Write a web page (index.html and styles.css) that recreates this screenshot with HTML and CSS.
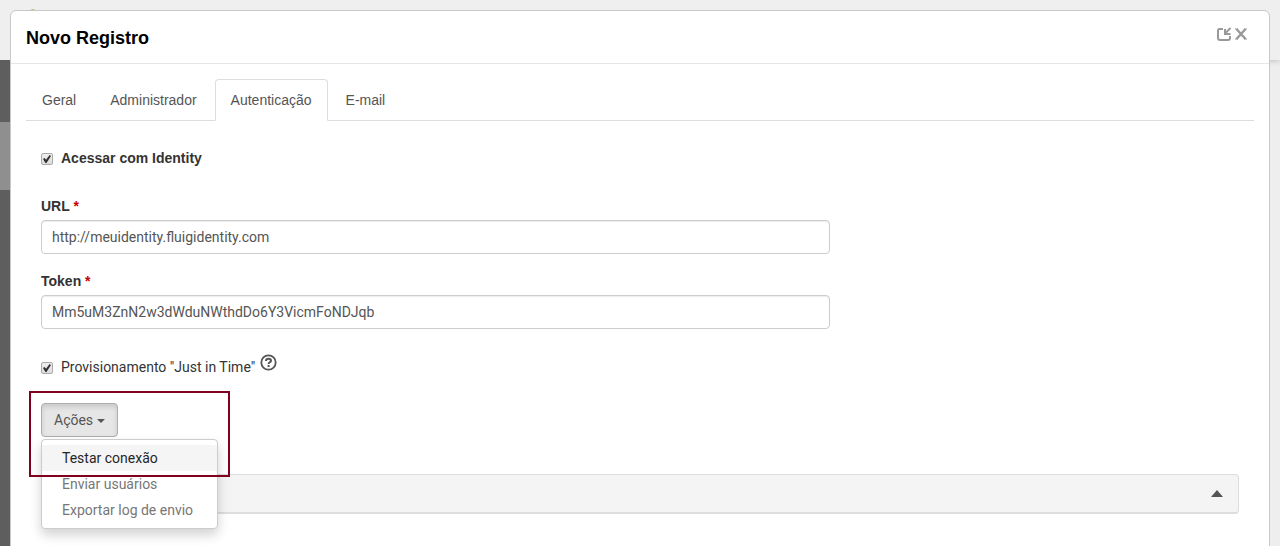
FILE: index.html
```html
<!DOCTYPE html>
<html lang="pt-BR">
<head>
  <meta charset="UTF-8">
  <title>Novo Registro</title>
  <meta name="viewport" content="width=device-width, initial-scale=1.0">
  <link rel="stylesheet" href="styles.css">
</head>
<body>
  <div class="page">
    <div class="topbar"><span class="logo"></span></div>
    <div class="sidebar"><div class="sidebar-item"></div></div>
  </div>

  <div class="modal" role="dialog" aria-labelledby="modal-title">
    <div class="modal-header">
      <h3 id="modal-title">Novo Registro</h3>
      <div class="modal-tools">
        <button type="button" aria-label="Restaurar">
          <svg width="16" height="16" viewBox="0 0 16 16" fill="none" stroke="#999" stroke-width="2">
            <path d="M7 3H3.500Q2 3 2 4.500V12Q2 14 4 14H12Q14 14 14 12V10"/>
            <path d="M14.500 2L9.500 7"/>
            <path d="M9 3V8H14.500"/>
          </svg>
        </button>
        <button type="button" aria-label="Fechar">
          <svg width="12" height="16" viewBox="0 0 12 16" fill="none" stroke="#999" stroke-width="2">
            <path d="M1.500 3L10.500 13M10.500 3L1.500 13" stroke-width="2.400"/>
            <path d="M0 3H3M9 3H12M0 13H3M9 13H12" stroke-width="1"/>
          </svg>
        </button>
      </div>
    </div>

    <div class="modal-body">
      <nav class="tabs">
        <a href="#geral">Geral</a>
        <a href="#administrador">Administrador</a>
        <a href="#autenticacao" class="active">Autenticação</a>
        <a href="#email">E-mail</a>
      </nav>

      <form class="tab-content">
        <label class="check check-strong">
          <input type="checkbox" checked>
          <span>Acessar com Identity</span>
        </label>

        <div class="form-group">
          <label for="url">URL <span class="required">*</span></label>
          <input type="text" id="url" value="http://meuidentity.fluigidentity.com">
        </div>
        <div class="form-group">
          <label for="token">Token <span class="required">*</span></label>
          <input type="text" id="token" value="Mm5uM3ZnN2w3dWduNWthdDo6Y3VicmFoNDJqb">
        </div>

        <div class="check-row">
          <label class="check">
            <input type="checkbox" checked>
            <span>Provisionamento "Just in Time"</span>
          </label>
          <svg class="help" width="17" height="17" viewBox="0 0 17 17" fill="none" stroke="#555" stroke-width="2">
            <circle cx="8.500" cy="8.500" r="7.200" stroke-width="1.800"/>
            <path d="M6 7Q6 4.700 8.500 4.700T11 6.800Q11 7.800 9.700 8.300Q8.600 8.800 8.600 10"/>
            <path d="M8.600 11V13"/>
          </svg>
        </div>

        <div class="dropdown">
          <button type="button" class="btn" aria-expanded="true">Ações <span class="caret"></span></button>
          <div class="menu">
            <a href="#testar" class="hover">Testar conexão</a>
            <a href="#enviar">Enviar usuários</a>
            <a href="#exportar">Exportar log de envio</a>
          </div>
          <div class="highlight"></div>
        </div>

        <div class="panel">
          <button type="button" class="panel-toggle" aria-label="Recolher"></button>
        </div>
      </form>
    </div>
  </div>
</body>
</html>
```

FILE: styles.css
```css
* {
  box-sizing: border-box;
}
body {
  margin: 0;
  height: 100vh;
  overflow: hidden;
  background: #eee;
  font-family: Roboto, Arial, sans-serif;
  font-size: 14px;
  line-height: 20px;
  color: #333;
}
.page {
  display: flex;
  flex-direction: column;
  height: 100%;
}
.topbar {
  height: 60px;
  padding: 9px 30px;
  background: #efefef;
  box-shadow: 0 1px 6px rgba(0,0,0,0.2);
}
.logo {
  display: block;
  width: 6px;
  height: 6px;
  border-radius: 50%;
  background: #b9c77c;
}
.sidebar {
  flex: 1;
  width: 60px;
  padding-top: 62px;
  background: #5e5e5e;
  z-index: 1;
}
.sidebar-item {
  height: 68px;
  background: #8f8f8f;
}

/* modal */
.modal {
  position: absolute;
  top: 10px;
  left: 10px;
  right: 10px;
  z-index: 2;
  min-height: 100vh;
  background: #fff;
  border: 1px solid #c8c8c8;
  border-radius: 6px;
}
.modal-header {
  display: flex;
  justify-content: space-between;
  align-items: flex-start;
  padding: 15px 22px 13px 15px;
  border-bottom: 1px solid #e5e5e5;
}
.modal-header h3 {
  margin: 0;
  font-family: "Liberation Sans", Arial, sans-serif;
  font-size: 18px;
  font-weight: bold;
  line-height: 24px;
  color: #000;
}
.modal-tools {
  display: flex;
  gap: 3px;
}
.modal-tools button {
  padding: 0;
  border: none;
  background: none;
  cursor: pointer;
}
.modal-tools svg {
  display: block;
}
.modal-body {
  padding: 15px;
}

/* tabs */
.tabs {
  display: flex;
  gap: 2px;
  border-bottom: 1px solid #ddd;
  font-family: "Liberation Sans", Arial, sans-serif;
}
.tabs a {
  margin-bottom: -1px;
  padding: 10px 15px;
  border: 1px solid transparent;
  border-radius: 4px 4px 0 0;
  color: #555;
  text-decoration: none;
}
.tabs .active {
  background: #fff;
  border-color: #ddd;
  border-bottom-color: #fff;
}

/* form */
.tab-content {
  padding: 27px 15px;
}
.check {
  display: flex;
  align-items: center;
  gap: 8px;
}
.check-strong {
  margin-bottom: 28px;
}
.check-strong,
.form-group label {
  font-family: "Liberation Sans", Arial, sans-serif;
  font-weight: bold;
}
.check input {
  appearance: none;
  display: grid;
  place-items: center;
  width: 12px;
  height: 12px;
  margin: 2px 0 0;
  border: 1px solid #aaa;
  border-radius: 2px;
  background: linear-gradient(#eee, #ddd);
}
.check input:checked::before {
  content: "";
  width: 8px;
  height: 8px;
  background: #333;
  clip-path: polygon(0 50%, 20% 38%, 38% 58%, 82% 0, 100% 14%, 44% 100%, 30% 100%);
}
.check-row {
  display: flex;
  align-items: flex-start;
  gap: 5px;
  padding-top: 8px;
}
.check-row .check {
  padding-top: 3px;
}
.form-group {
  width: calc(100% * 2 / 3 - 10px);
  margin-bottom: 17px;
}
.form-group label {
  display: block;
  margin-bottom: 4px;
}
.form-group .required {
  color: #c00;
}
.form-group input {
  display: block;
  width: 100%;
  height: 34px;
  padding: 6px 10px;
  border: 1px solid #ccc;
  border-radius: 4px;
  box-shadow: inset 0 1px 1px rgba(0,0,0,0.075);
  font: inherit;
  color: #555;
}

/* actions dropdown */
.dropdown {
  position: relative;
  display: inline-block;
  margin-top: 26px;
}
.btn {
  display: flex;
  align-items: center;
  gap: 4px;
  height: 34px;
  padding: 0 12px;
  border: 1px solid #adadad;
  border-radius: 4px;
  background: #e6e6e6;
  box-shadow: inset 0 3px 5px rgba(0,0,0,0.125);
  font: inherit;
  color: #555;
  cursor: pointer;
}
.caret {
  margin-top: 2px;
  border-top: 4px solid #555;
  border-left: 4px solid transparent;
  border-right: 4px solid transparent;
}
.menu {
  position: absolute;
  top: 100%;
  left: 0;
  z-index: 3;
  min-width: 177px;
  margin-top: 2px;
  padding: 5px 0;
  border: 1px solid #ccc;
  border-radius: 4px;
  background: #fff;
  box-shadow: 0 6px 12px rgba(0,0,0,0.175);
}
.menu a {
  display: block;
  padding: 3px 20px;
  color: #777;
  text-decoration: none;
  white-space: nowrap;
}
.menu a:hover,
.menu .hover {
  background: #f5f5f5;
  color: #262626;
}
.highlight {
  position: absolute;
  top: -12px;
  left: -12px;
  z-index: 4;
  width: 201px;
  height: 86px;
  border: 2px solid #80001e;
  pointer-events: none;
}

.panel {
  display: flex;
  justify-content: flex-end;
  align-items: center;
  height: 40px;
  margin-top: 37px;
  padding: 0 15px;
  border: 1px solid #ddd;
  border-bottom-width: 2px;
  border-radius: 4px;
  background: #f4f4f4;
}
.panel-toggle {
  width: 12px;
  height: 7px;
  padding: 0;
  border: none;
  background: #555;
  clip-path: polygon(50% 0, 100% 100%, 0 100%);
  cursor: pointer;
}
```
